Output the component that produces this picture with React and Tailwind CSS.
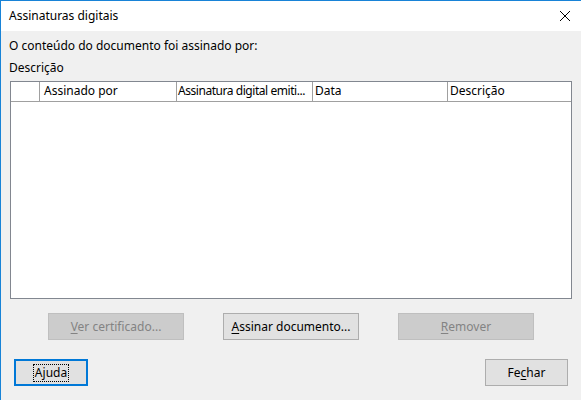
export default function App() {
  const font = { fontFamily: '"Segoe UI", "Noto Sans", "Open Sans", sans-serif' };
  return (
    <div
      className="w-[581px] h-[400px] bg-[#f0f0f0] border-l border-t border-[#1883d7] flex flex-col text-[12px] text-black overflow-hidden"
      style={font}
    >
      <div className="h-[30px] bg-white flex items-center justify-between pl-[8px] pr-[8px] shrink-0">
        <span className="leading-none">Assinaturas digitais</span>
        <svg width="12" height="12" viewBox="0 0 12 12" className="mr-[2px]">
          <path d="M1 1 L11 11 M11 1 L1 11" stroke="#000" strokeWidth="1" />
        </svg>
      </div>
      <div className="flex flex-col pl-[8px]">
        <div className="h-[16px] mt-[7px] leading-[16px]">O conteúdo do documento foi assinado por:</div>
        <div className="h-[16px] mt-[6px] leading-[16px]">Descrição</div>
        <div className="mt-[5px] ml-[1px] w-[562px] h-[218px] border border-[#828790] bg-white flex flex-col">
          <div className="h-[20px] flex border-b border-[#a0a0a0] leading-[18px] shrink-0">
            <div className="w-[29px] border-r border-[#a0a0a0]" />
            <div className="w-[137px] border-r border-[#a0a0a0] pl-[4px]">Assinado por</div>
            <div className="w-[136px] border-r border-[#a0a0a0] pl-[1px] whitespace-nowrap overflow-hidden tracking-[-0.45px]">Assinatura digital emiti...</div>
            <div className="w-[135px] border-r border-[#a0a0a0] pl-[2px]">Data</div>
            <div className="flex-1 pl-[2px]">Descrição</div>
          </div>
          <div className="flex-1" />
        </div>
        <div className="mt-[14px] flex ml-[39px] gap-[39px]">
          <button className="w-[136px] h-[27px] bg-[#cccccc] border border-[#bfbfbf] text-[#838383]">
            <span className="underline underline-offset-2">V</span>er certificado...
          </button>
          <button className="w-[136px] h-[27px] bg-[#e1e1e1] border border-[#adadad] text-black">
            <span className="underline underline-offset-2">A</span>ssinar documento...
          </button>
          <button className="w-[136px] h-[27px] bg-[#cccccc] border border-[#bfbfbf] text-[#838383]">
            <span className="underline underline-offset-2">R</span>emover
          </button>
        </div>
        <div className="mt-[19px] flex justify-between pr-[13px]">
          <button className="ml-[5px] w-[74px] h-[27px] bg-[#e1e1e1] border-2 border-[#0078d7] flex items-center justify-center">
            <span className="border border-dotted border-black px-[1px] leading-[16px]">
              A<span className="underline underline-offset-2">j</span>uda
            </span>
          </button>
          <button className="w-[83px] h-[27px] bg-[#e1e1e1] border border-[#adadad]">
            Fe<span className="underline underline-offset-2">c</span>har
          </button>
        </div>
      </div>
    </div>
  );
}
